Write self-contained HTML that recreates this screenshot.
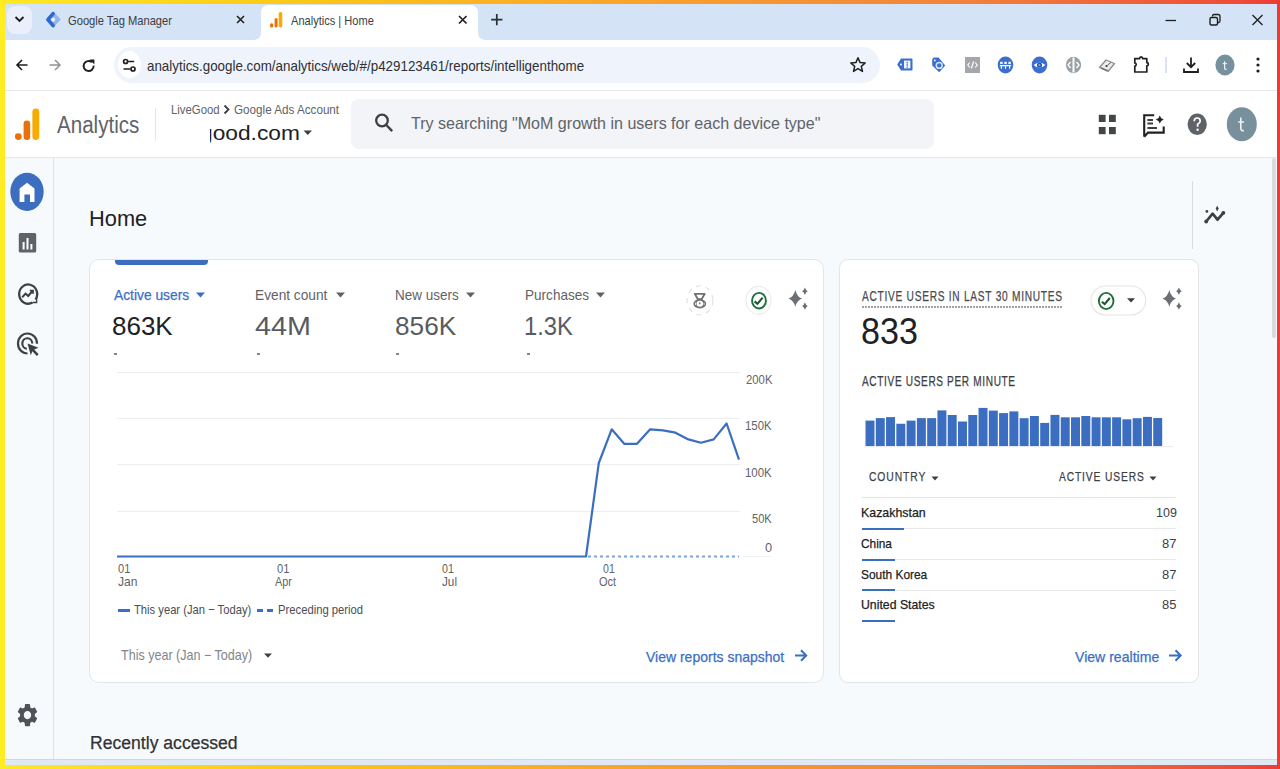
<!DOCTYPE html>
<html><head><meta charset="utf-8"><title>Analytics | Home</title>
<style>
html,body{margin:0;padding:0;}
body{width:1280px;height:769px;overflow:hidden;position:relative;background:#fff;font-family:"Liberation Sans",sans-serif;}
.t{position:absolute;line-height:1;white-space:nowrap;transform-origin:0 0;}
.r{position:absolute;display:block;}
svg.r{overflow:visible;}
</style></head><body>
<div class="r" style="left:5px;top:4px;width:1272px;height:36px;background:#d4e3f5;"></div>
<div class="r" style="left:7px;top:6px;width:25px;height:28px;background:#e9f0fb;border-radius:8px;"></div>
<svg class="r" style="left:13px;top:15px;" width="13" height="9" viewBox="0 0 13 9"><path d="M2.5 2 L6.5 6 L10.5 2" fill="none" stroke="#1f1f1f" stroke-width="1.9"/></svg>
<svg class="r" style="left:45px;top:11px;" width="16" height="17" viewBox="0 0 16 17"><path d="M8.1 1.4 L14.7 8.6 L8.1 15.8 L1.5 8.6 Z" fill="#8fb4ee" stroke="#8fb4ee" stroke-width="1.5" stroke-linejoin="round"/><path d="M8.1 2.6 L3 8.6 L8.1 14.6" fill="none" stroke="#2f68d0" stroke-width="3.6" stroke-linecap="round" stroke-linejoin="round"/><circle cx="8.1" cy="8.6" r="2.1" fill="#e8f1fc"/></svg>
<div class="t" style="left:67.64px;top:14.00px;font-size:13px;color:#3c4043;transform:scaleX(0.8581);">Google Tag Manager</div>
<svg class="r" style="left:235px;top:14px;" width="11" height="11" viewBox="0 0 11 11"><path d="M2 2 L9 9 M9 2 L2 9" stroke="#222" stroke-width="1.6"/></svg>
<svg class="r" style="left:253px;top:5px" width="242" height="35" viewBox="0 0 242 35"><path d="M0 35 Q8 35 8 27 L8 8 Q8 0 16 0 L217 0 Q225 0 225 8 L225 27 Q225 35 233 35 Z" fill="#fff"/></svg>
<svg class="r" style="left:269px;top:11px;" width="15" height="18" viewBox="0 0 15 18"><rect x="1" y="12.3" width="3.2" height="4.3" rx="1.6" fill="#e8710a"/><rect x="5.6" y="7" width="3" height="9.6" rx="1.5" fill="#e8710a"/><rect x="9.7" y="1" width="3.6" height="15.6" rx="1.8" fill="#f9ab00"/></svg>
<div class="t" style="left:290.90px;top:15.00px;font-size:12.8px;color:#3c4043;transform:scaleX(0.8647);">Analytics | Home</div>
<svg class="r" style="left:457px;top:14px;" width="11" height="11" viewBox="0 0 11 11"><path d="M2 2 L9.5 9.5 M9.5 2 L2 9.5" stroke="#222" stroke-width="1.7"/></svg>
<svg class="r" style="left:490px;top:13px;" width="13" height="13" viewBox="0 0 13 13"><path d="M6.8 1 V12.2 M1.2 6.6 H12.4" stroke="#2a3036" stroke-width="1.7"/></svg>
<svg class="r" style="left:1164px;top:14px;" width="14" height="12" viewBox="0 0 14 12"><path d="M1.5 6.5 H12" stroke="#1f1f1f" stroke-width="1.3"/></svg>
<svg class="r" style="left:1208px;top:13px;" width="14" height="14" viewBox="0 0 14 14"><path d="M4.5 3.5 V3 Q4.5 1.5 6 1.5 H10 Q12 1.5 12 3.5 V8 Q12 9.5 10.5 9.5 H10" fill="none" stroke="#1f1f1f" stroke-width="1.3"/><rect x="2" y="4.5" width="7.5" height="7.5" rx="1.5" fill="none" stroke="#1f1f1f" stroke-width="1.4"/></svg>
<svg class="r" style="left:1250px;top:13px;" width="15" height="14" viewBox="0 0 15 14"><path d="M2.5 2 L12.5 12 M12.5 2 L2.5 12" stroke="#1f1f1f" stroke-width="1.3"/></svg>
<div class="r" style="left:5px;top:40px;width:1272px;height:50px;background:#ffffff;"></div>
<div class="r" style="left:5px;top:89.5px;width:1272px;height:1.0px;background:#e6e7ea;"></div>
<svg class="r" style="left:14px;top:57px;" width="16" height="16" viewBox="0 0 16 16"><path d="M13.5 8 H3 M8 3 L3 8 L8 13" fill="none" stroke="#1f1f1f" stroke-width="1.6"/></svg>
<svg class="r" style="left:47px;top:57px;" width="16" height="16" viewBox="0 0 16 16"><path d="M2.5 8 H13 M8 3 L13 8 L8 13" fill="none" stroke="#8f9296" stroke-width="1.5"/></svg>
<svg class="r" style="left:81px;top:58px;" width="16" height="16" viewBox="0 0 16 16"><path d="M12.6 7.6 A5 5 0 1 1 10.9 4.2" fill="none" stroke="#1f1f1f" stroke-width="1.9"/><path d="M8.6 1.6 H13.4 V6.4 Z" fill="#1f1f1f"/></svg>
<div class="r" style="left:114px;top:47px;width:766px;height:36px;background:#eff3fb;border-radius:18px;"></div>
<div class="r" style="left:118px;top:51px;width:23px;height:27px;background:#ffffff;border-radius:50%;"></div>
<svg class="r" style="left:121px;top:55px;" width="17" height="17" viewBox="0 0 17 17"><circle cx="4.6" cy="6.5" r="2" fill="none" stroke="#1f1f1f" stroke-width="1.7"/><path d="M7.2 6.5 H13.2 M2.5 14 H9" stroke="#1f1f1f" stroke-width="1.7"/><circle cx="12" cy="14" r="2" fill="none" stroke="#1f1f1f" stroke-width="1.7"/></svg>
<div class="t" style="left:147.47px;top:59.00px;font-size:14.5px;color:#2e3034;transform:scaleX(0.9222);">analytics.google.com/analytics/web/#/p429123461/reports/intelligenthome</div>
<svg class="r" style="left:849px;top:56px;" width="18" height="18" viewBox="0 0 18 18"><path d="M9 1.8 L11.1 6.6 L16.2 7 L12.3 10.4 L13.5 15.4 L9 12.7 L4.5 15.4 L5.7 10.4 L1.8 7 L6.9 6.6 Z" fill="none" stroke="#1f1f1f" stroke-width="1.5" stroke-linejoin="round"/></svg>
<svg class="r" style="left:896px;top:57px;" width="18" height="15" viewBox="0 0 18 15"><path d="M5 1.5 H15.5 Q16.5 1.5 16.5 2.5 V12.5 Q16.5 13.5 15.5 13.5 H5 L1.2 7.5 Z" fill="#3a6fd0"/><rect x="8" y="3.6" width="6.4" height="7.8" fill="#f4f7fd"/><rect x="10.6" y="4.8" width="1.3" height="1.6" fill="#3a6fd0"/><rect x="10.6" y="7.2" width="1.3" height="1.6" fill="#3a6fd0"/><rect x="10.6" y="9.6" width="1.3" height="1.2" fill="#3a6fd0"/><circle cx="5" cy="7.5" r="0.9" fill="#fff"/></svg>
<svg class="r" style="left:930px;top:56px;" width="17" height="18" viewBox="0 0 17 18"><path d="M2.2 4 Q2.2 1.6 4.6 1.6 L8.6 1.6 L15.2 9.4 L9.2 16.2 L2.2 9.4 Z" fill="#3a6fd0"/><circle cx="9.2" cy="9.4" r="2.9" fill="none" stroke="#d6e4fb" stroke-width="1.5"/><circle cx="4.8" cy="4.4" r="0.9" fill="#fff"/></svg>
<div class="r" style="left:965px;top:57px;width:15px;height:16px;background:#a3a6aa;"></div>
<svg class="r" style="left:965px;top:57px;" width="15" height="16" viewBox="0 0 15 16"><path d="M4.8 5.5 L2.8 8 L4.8 10.5 M10.2 5.5 L12.2 8 L10.2 10.5 M8.6 4.5 L6.4 11.5" fill="none" stroke="#fff" stroke-width="1.2"/></svg>
<svg class="r" style="left:997px;top:56px;" width="17" height="18" viewBox="0 0 17 18"><ellipse cx="8.5" cy="9" rx="7.8" ry="8.4" fill="#3a6fd0"/><rect x="3.2" y="5.8" width="2.4" height="2.2" fill="#fff"/><rect x="7.3" y="5.8" width="2.4" height="2.2" fill="#fff"/><rect x="11.4" y="5.8" width="2.4" height="2.2" fill="#fff"/><path d="M2.8 9.6 H14.2" stroke="#fff" stroke-width="1.3"/><path d="M4.4 9.6 V12.8 M8.5 9.6 V12.8 M12.6 9.6 V12.8" stroke="#fff" stroke-width="1.2"/></svg>
<svg class="r" style="left:1031px;top:56px;" width="17" height="18" viewBox="0 0 17 18"><ellipse cx="8.5" cy="9" rx="7.8" ry="8.4" fill="#3a6fd0"/><path d="M2.6 9 Q8.5 3.8 14.4 9 Q8.5 14.2 2.6 9 Z" fill="#fff"/><circle cx="8.5" cy="9" r="2.6" fill="#2a55a8"/><circle cx="8.5" cy="9" r="1.1" fill="#8fb0e8"/></svg>
<svg class="r" style="left:1065px;top:56px;" width="17" height="18" viewBox="0 0 17 18"><ellipse cx="8.5" cy="9" rx="7.6" ry="8.3" fill="#9aa0a6"/><path d="M8.5 1.5 V16.5" stroke="#fff" stroke-width="2"/><path d="M5.5 6 L3 9 L5.5 12 M11.5 6 L14 9 L11.5 12" fill="none" stroke="#fff" stroke-width="1.4"/></svg>
<svg class="r" style="left:1098px;top:58px;" width="18" height="16" viewBox="0 0 18 16"><path d="M1.5 9.5 L8 2 L16.5 5.5 L10 13.5 Z" fill="#ececec" stroke="#8a8a8a" stroke-width="1.2" stroke-linejoin="round"/><path d="M3 9.8 L9.6 12.6" stroke="#6d6d6d" stroke-width="1.4"/><circle cx="8.6" cy="8" r="1.1" fill="#333"/><path d="M9.5 7.2 L13 4.4" stroke="#555" stroke-width="0.9"/></svg>
<svg class="r" style="left:1132px;top:55px;" width="18" height="19" viewBox="0 0 18 19"><path d="M2.8 3.6 H7.6 Q7.6 1.9 9.1 1.9 Q10.6 1.9 10.6 3.6 H14.8 V7.6 Q16.4 7.6 16.4 9.2 Q16.4 10.8 14.8 10.8 V17 H2.8 V11.2 Q4.2 11.2 4.2 9.6 Q4.2 8 2.8 8 Z" fill="none" stroke="#1f1f1f" stroke-width="1.7" stroke-linejoin="round"/></svg>
<div class="r" style="left:1165px;top:57px;width:2px;height:16px;background:#d9e2f2;"></div>
<svg class="r" style="left:1182px;top:56px;" width="18" height="18" viewBox="0 0 18 18"><path d="M9 1.5 V11 M4.8 7 L9 11.2 L13.2 7" fill="none" stroke="#1f1f1f" stroke-width="1.8"/><path d="M2 12.5 V16 H16 V12.5" fill="none" stroke="#1f1f1f" stroke-width="1.8"/></svg>
<svg class="r" style="left:1215px;top:54px;" width="20" height="22" viewBox="0 0 20 22"><ellipse cx="10" cy="11" rx="9.6" ry="10.4" fill="#77909e"/></svg>
<svg class="r" style="left:1220px;top:60px;" width="10" height="11" viewBox="0 0 10 11"><path d="M4.6 1.2 V8.2 Q4.6 9.6 6.6 9.4" fill="none" stroke="#eef2f4" stroke-width="1.2"/><path d="M2.6 3.6 H7" stroke="#eef2f4" stroke-width="1.1"/></svg>
<svg class="r" style="left:1255px;top:56px;" width="6" height="18" viewBox="0 0 6 18"><circle cx="3" cy="3" r="1.6" fill="#1f1f1f"/><circle cx="3" cy="9" r="1.6" fill="#1f1f1f"/><circle cx="3" cy="15" r="1.6" fill="#1f1f1f"/></svg>
<div class="r" style="left:5px;top:90.5px;width:1272px;height:66.5px;background:#ffffff;"></div>
<div class="r" style="left:5px;top:157px;width:1272px;height:1px;background:#e5e8eb;"></div>
<svg class="r" style="left:14px;top:107px;" width="27" height="35" viewBox="0 0 27 35"><circle cx="4.3" cy="29.6" r="3.4" fill="#e8710a"/><rect x="9.6" y="13.6" width="6.6" height="19.4" rx="3.3" fill="#e8710a"/><rect x="18.4" y="1.4" width="6.8" height="31.6" rx="3.4" fill="#f9ab00"/></svg>
<div class="t" style="left:57.40px;top:114.00px;font-size:23px;color:#5f6368;transform:scaleX(0.8948);">Analytics</div>
<div class="r" style="left:155px;top:108px;width:1px;height:33px;background:#e3e5e8;"></div>
<div class="t" style="left:170.84px;top:103.00px;font-size:13px;color:#5f6368;transform:scaleX(0.8724);">LiveGood</div>
<svg class="r" style="left:222px;top:104px;" width="9" height="11" viewBox="0 0 9 11"><path d="M2.5 1.5 L6.5 5.5 L2.5 9.5" fill="none" stroke="#3c4043" stroke-width="1.8"/></svg>
<div class="t" style="left:234.02px;top:103.00px;font-size:13px;color:#5f6368;transform:scaleX(0.8977);">Google Ads Account</div>
<div class="r" style="left:209.5px;top:118px;width:92px;height:28px;overflow:hidden"><div class="t" style="left:-9.55px;top:4px;font-size:21px;color:#202124;transform:scaleX(1.0824)">good.com</div></div>
<svg class="r" style="left:303px;top:130px;" width="10" height="6" viewBox="0 0 10 6"><path d="M0.5 0.5 H9 L4.75 5 Z" fill="#3c4043"/></svg>
<div class="r" style="left:351px;top:99px;width:583px;height:50px;background:#f2f4f8;border-radius:8px;"></div>
<svg class="r" style="left:374px;top:112px;" width="21" height="22" viewBox="0 0 21 22"><circle cx="8" cy="8.5" r="5.8" fill="none" stroke="#3c4043" stroke-width="2.3"/><path d="M12.3 13 L18.2 19.2" stroke="#3c4043" stroke-width="2.4"/></svg>
<div class="t" style="left:411.28px;top:115.00px;font-size:16.5px;color:#5f6368;transform:scaleX(0.9724);">Try searching "MoM growth in users for each device type"</div>
<svg class="r" style="left:1098px;top:114px;" width="19" height="21" viewBox="0 0 19 21"><rect x="0.8" y="0.8" width="6.8" height="7.2" fill="#434649"/><rect x="11" y="0.8" width="6.8" height="7.2" fill="#434649"/><rect x="0.8" y="13" width="6.8" height="7.2" fill="#434649"/><rect x="11" y="13" width="6.8" height="7.2" fill="#434649"/></svg>
<svg class="r" style="left:1141px;top:113px;" width="26" height="26" viewBox="0 0 26 26"><path d="M3.2 23.8 V2.3 H13.2 M3.2 23.8 L7 19.6 H22.7 V13.6" fill="none" stroke="#202124" stroke-width="2.1" stroke-linejoin="miter"/><path d="M6.4 7 H12 M6.4 10.5 H12 M6.4 15 H16" stroke="#3c4043" stroke-width="1.8"/><path d="M18.8 2.6 L20.2 5.2 L22.8 6.6 L20.2 8 L18.8 10.6 L17.4 8 L14.8 6.6 L17.4 5.2 Z" fill="#202124"/></svg>
<svg class="r" style="left:1187px;top:112px;" width="21" height="24" viewBox="0 0 21 24"><ellipse cx="10.2" cy="12.3" rx="9.6" ry="10.8" fill="#5f6368"/><path d="M7.2 9.3 Q7.2 6 10.2 6 Q13.2 6 13.2 9 Q13.2 11 10.6 12.2 V14.8" fill="none" stroke="#fff" stroke-width="1.7"/><circle cx="10.6" cy="17.8" r="1.2" fill="#fff"/></svg>
<svg class="r" style="left:1226px;top:107px;" width="32" height="35" viewBox="0 0 32 35"><ellipse cx="15.8" cy="17.2" rx="15" ry="17" fill="#78909c"/></svg>
<svg class="r" style="left:1234px;top:115px;" width="14" height="19" viewBox="0 0 14 19"><path d="M6.8 2.5 V13.6 Q6.8 15.9 9.8 15.6" fill="none" stroke="#eef2f4" stroke-width="1.6"/><path d="M4.2 7 H10" stroke="#eef2f4" stroke-width="1.5"/></svg>
<div class="r" style="left:5px;top:158px;width:1272px;height:601px;background:#f7fafc;"></div>
<div class="r" style="left:52.5px;top:158px;width:1.0px;height:601px;background:#dfe1e5;"></div>
<div class="r" style="left:5px;top:759px;width:1272px;height:1px;background:#d3d7dc;"></div>
<div class="r" style="left:5px;top:760px;width:1272px;height:5px;background:#dfe9f6;"></div>
<svg class="r" style="left:10px;top:172px;" width="34" height="39" viewBox="0 0 34 39"><ellipse cx="17" cy="19.8" rx="16.7" ry="19.1" fill="#3b6ec0"/><path d="M9.6 16.6 L17 10.7 L24.5 16.6 V30 H20 V22.6 H14.4 V30 H9.6 Z" fill="#fff"/></svg>
<svg class="r" style="left:18px;top:232px;" width="19" height="21" viewBox="0 0 19 21"><rect x="0.8" y="1" width="17.4" height="19.5" rx="1.5" fill="#5f6368"/><rect x="4.6" y="10" width="2" height="7.5" fill="#fff"/><rect x="8.5" y="6" width="2" height="11.5" fill="#fff"/><rect x="12.4" y="12" width="2" height="5.5" fill="#fff"/></svg>
<svg class="r" style="left:17px;top:283px;" width="21" height="22" viewBox="0 0 21 22"><path d="M18.6 16.5 A9 9.6 0 1 0 15.5 19.5" fill="none" stroke="#3c4043" stroke-width="2.3"/><path d="M15.5 19.5 H19.6 V15.5" fill="none" stroke="#3c4043" stroke-width="1.4"/><path d="M5.2 14.2 L8.6 10.6 L11.2 13 L15.5 8" fill="none" stroke="#3c4043" stroke-width="2"/><path d="M12.8 7.6 H16 V10.8" fill="none" stroke="#3c4043" stroke-width="1.8"/></svg>
<svg class="r" style="left:17px;top:333px;" width="23" height="24" viewBox="0 0 23 24"><path d="M10.5 20.5 A9.5 10 0 1 1 20 10.8" fill="none" stroke="#3c4043" stroke-width="2.2"/><path d="M9.8 15.8 A5 5.3 0 1 1 15.3 10.6" fill="none" stroke="#3c4043" stroke-width="2.2"/><path d="M10.5 10.5 L21.5 14.8 L17.2 16.5 L21.6 21.3 L19.8 23 L15.4 18.3 L13.8 22.2 Z" fill="#3c4043"/></svg>
<svg class="r" style="left:16px;top:702px;" width="23" height="26" viewBox="0 0 23 26"><g transform="translate(-0.9 -0.7) scale(1.03 1.15)"><path d="M19.14 12.94c.04-.3.06-.61.06-.94 0-.32-.02-.64-.07-.94l2.03-1.58c.18-.14.23-.41.12-.61l-1.92-3.32c-.12-.22-.37-.29-.59-.22l-2.39.96c-.5-.38-1.03-.7-1.62-.94L14.4 2.81c-.04-.24-.24-.41-.48-.41h-3.84c-.24 0-.43.17-.47.41L9.25 5.35c-.59.24-1.13.57-1.62.94L5.24 5.33c-.22-.08-.47 0-.59.22L2.74 8.87c-.12.21-.08.47.12.61l2.03 1.58c-.05.3-.09.63-.09.94s.02.64.07.94l-2.03 1.58c-.18.14-.23.41-.12.61l1.92 3.32c.12.22.37.29.59.22l2.39-.96c.5.38 1.03.7 1.62.94l.36 2.54c.05.24.24.41.48.41h3.84c.24 0 .44-.17.47-.41l.36-2.54c.59-.24 1.13-.56 1.62-.94l2.39.96c.22.08.47 0 .59-.22l1.92-3.32c.12-.22.07-.47-.12-.61l-2.01-1.58zM12 15.6c-1.98 0-3.6-1.62-3.6-3.6s1.62-3.6 3.6-3.6 3.6 1.62 3.6 3.6-1.62 3.6-3.6 3.6z" fill="#4f5357"/></g></svg>
<div class="t" style="left:89.46px;top:208.00px;font-size:22.5px;color:#202124;transform:scaleX(0.9692);">Home</div>
<div class="r" style="left:1192px;top:181px;width:1px;height:68px;background:#dadce0;"></div>
<svg class="r" style="left:1203px;top:204px;" width="25" height="22" viewBox="0 0 25 22"><path d="M3.2 17.5 L9.6 9.7 L14.5 15.7 L20.4 8.8" fill="none" stroke="#3c4043" stroke-width="2.7" stroke-linejoin="round" stroke-linecap="round"/><circle cx="3.2" cy="17.5" r="1.9" fill="#3c4043"/><circle cx="20.4" cy="8.8" r="1.9" fill="#3c4043"/><circle cx="3.9" cy="7.4" r="1.4" fill="#3c4043"/><path d="M14.2 1.8 L15.7 4.6 L14.2 7.4 L12.7 4.6 Z" fill="#3c4043"/></svg>
<div class="r" style="left:1272px;top:158px;width:4px;height:180px;background:#d9dbde;border-radius:2px;"></div>
<div class="r" style="left:89px;top:259px;width:735px;height:424px;background:#ffffff;box-sizing:border-box;border:1px solid #e3e5e8;border-radius:10px;"></div>
<div class="r" style="left:114.5px;top:260px;width:93.5px;height:4.5px;background:#3b6ec0;border-radius:0 0 4px 4px;"></div>
<div class="t" style="left:113.50px;top:288.00px;font-size:14.5px;color:#3b6fc4;transform:scaleX(0.9523);-webkit-text-stroke:0.25px currentColor;">Active users</div>
<div class="t" style="left:255.20px;top:288.00px;font-size:14.5px;color:#5f6368;transform:scaleX(0.9456);">Event count</div>
<div class="t" style="left:394.82px;top:288.00px;font-size:14.5px;color:#5f6368;transform:scaleX(0.9290);">New users</div>
<div class="t" style="left:525.42px;top:288.00px;font-size:14.5px;color:#5f6368;transform:scaleX(0.9350);">Purchases</div>
<svg class="r" style="left:196px;top:292px;" width="9" height="6" viewBox="0 0 9 6"><path d="M0 0.5 H9 L4.5 5.5 Z" fill="#3b6fc4"/></svg>
<svg class="r" style="left:335.5px;top:292px;" width="9" height="6" viewBox="0 0 9 6"><path d="M0 0.5 H9 L4.5 5.5 Z" fill="#5f6368"/></svg>
<svg class="r" style="left:465.5px;top:292px;" width="9" height="6" viewBox="0 0 9 6"><path d="M0 0.5 H9 L4.5 5.5 Z" fill="#5f6368"/></svg>
<svg class="r" style="left:596px;top:292px;" width="9" height="6" viewBox="0 0 9 6"><path d="M0 0.5 H9 L4.5 5.5 Z" fill="#5f6368"/></svg>
<div class="t" style="left:112.46px;top:313.00px;font-size:26.5px;color:#202124;transform:scaleX(0.9805);">863K</div>
<div class="t" style="left:255.43px;top:313.00px;font-size:26.5px;color:#585c61;transform:scaleX(1.0840);">44M</div>
<div class="t" style="left:394.95px;top:313.00px;font-size:26.5px;color:#585c61;transform:scaleX(0.9887);">856K</div>
<div class="t" style="left:524.22px;top:313.00px;font-size:26.5px;color:#585c61;transform:scaleX(0.8980);">1.3K</div>
<div class="r" style="left:114px;top:353px;width:3px;height:1.5px;background:#80868b;"></div>
<div class="r" style="left:257px;top:353px;width:3px;height:1.5px;background:#80868b;"></div>
<div class="r" style="left:396px;top:353px;width:3px;height:1.5px;background:#80868b;"></div>
<div class="r" style="left:527px;top:353px;width:3px;height:1.5px;background:#80868b;"></div>
<svg class="r" style="left:685px;top:284px;" width="30" height="33" viewBox="0 0 30 33"><ellipse cx="15" cy="16.3" rx="12.9" ry="14.5" fill="none" stroke="#e3e3e3" stroke-width="1.3" stroke-dasharray="5 5"/><path d="M9.8 9.9 H19.7 L16.6 15.3 H12.9 Z" fill="none" stroke="#707070" stroke-width="1.9" stroke-linejoin="round"/><ellipse cx="14.8" cy="19.8" rx="6.4" ry="4.6" fill="#707070"/><ellipse cx="14.8" cy="19.8" rx="3.3" ry="3" fill="#fff"/><path d="M14.8 17.8 L15.7 19.3 L14.8 20.8 L13.9 19.3 Z" fill="#707070"/><path d="M10.5 18.5 V21 M19.1 18.5 V21" stroke="#fff" stroke-width="0.8"/></svg>
<svg class="r" style="left:745px;top:286px;" width="28" height="30" viewBox="0 0 28 30"><ellipse cx="13.5" cy="14.35" rx="12.5" ry="14" fill="#fff" stroke="#ebebeb" stroke-width="1.1"/><ellipse cx="14" cy="14.7" rx="6.95" ry="7.8" fill="none" stroke="#1e7038" stroke-width="1.9"/><path d="M9.6 15.4 L12.5 17.8 L17.6 11.7" fill="none" stroke="#17592c" stroke-width="2.1"/></svg>
<svg class="r" style="left:786px;top:284px;" width="24" height="28" viewBox="0 0 24 28"><path d="M9.3 5.9 Q11 12.8 16 14.5 Q11 16.2 9.3 22.7 Q7.6 16.2 2.5 14.5 Q7.6 12.8 9.3 5.9 Z" fill="#6b6e72"/><path d="M18.9 3.5 Q19.8 6.3 21.7 7.2 Q19.8 8.1 18.9 10.9 Q18 8.1 16.1 7.2 Q18 6.3 18.9 3.5 Z" fill="#6b6e72"/><path d="M18.9 18.2 Q19.8 21.1 21.7 22 Q19.8 22.9 18.9 25.8 Q18 22.9 16.1 22 Q18 21.1 18.9 18.2 Z" fill="#6b6e72"/></svg>
<div class="r" style="left:117px;top:372px;width:623px;height:1px;background:#eceef0;"></div>
<div class="r" style="left:117px;top:418px;width:623px;height:1px;background:#eceef0;"></div>
<div class="r" style="left:117px;top:464px;width:623px;height:1px;background:#eceef0;"></div>
<div class="r" style="left:117px;top:511px;width:623px;height:1px;background:#eceef0;"></div>
<div class="r" style="left:743px;top:556px;width:29px;height:1px;background:#f1f3f4;"></div>
<div class="t" style="left:745.63px;top:373.00px;font-size:13px;color:#5f6368;transform:scaleX(0.8704);">200K</div>
<div class="t" style="left:745.34px;top:419.00px;font-size:13px;color:#5f6368;transform:scaleX(0.8801);">150K</div>
<div class="t" style="left:745.34px;top:466.00px;font-size:13px;color:#5f6368;transform:scaleX(0.8801);">100K</div>
<div class="t" style="left:752.36px;top:512.00px;font-size:13px;color:#5f6368;transform:scaleX(0.8537);">50K</div>
<div class="t" style="left:765.35px;top:541.00px;font-size:13px;color:#5f6368;transform:scaleX(0.9833);">0</div>
<div class="t" style="left:117.81px;top:563.00px;font-size:12.8px;color:#5f6368;transform:scaleX(0.8647);">01</div>
<div class="t" style="left:118.02px;top:576.00px;font-size:12.8px;color:#5f6368;transform:scaleX(0.9416);">Jan</div>
<div class="t" style="left:277.01px;top:563.00px;font-size:12.8px;color:#5f6368;transform:scaleX(0.8723);">01</div>
<div class="t" style="left:275.00px;top:576.00px;font-size:12.8px;color:#5f6368;transform:scaleX(0.8495);">Apr</div>
<div class="t" style="left:442.43px;top:563.00px;font-size:12.8px;color:#5f6368;transform:scaleX(0.8343);">01</div>
<div class="t" style="left:442.02px;top:576.00px;font-size:12.8px;color:#5f6368;transform:scaleX(0.9180);">Jul</div>
<div class="t" style="left:603.43px;top:563.00px;font-size:12.8px;color:#5f6368;transform:scaleX(0.8268);">01</div>
<div class="t" style="left:598.51px;top:576.00px;font-size:12.8px;color:#5f6368;transform:scaleX(0.8589);">Oct</div>
<svg class="r" style="left:90px;top:360px;" width="660" height="210" viewBox="0 0 660 210"><path d="M498 556.5 H649" transform="translate(0 -360)" stroke="#7aa3e0" stroke-width="2" stroke-dasharray="3 3"/><path d="M27.0 196.5 L496.0 196.5 L508.8 103.0 L521.7 69.3 L534.2 83.8 L547.0 83.8 L560.2 69.3 L573.0 70.3 L585.5 72.7 L598.4 79.4 L610.9 82.8 L623.7 79.4 L636.6 63.5 L649.0 99.7" fill="none" stroke="#3b6ec0" stroke-width="2.2" stroke-linejoin="round"/></svg>
<div class="r" style="left:118px;top:609px;width:12px;height:2.7999999999999545px;background:#3b6fc4;"></div>
<div class="t" style="left:134.38px;top:603.00px;font-size:13.3px;color:#4a4e52;transform:scaleX(0.8431);">This year (Jan − Today)</div>
<div class="r" style="left:257px;top:609px;width:6px;height:2.7999999999999545px;background:#3b6fc4;"></div>
<div class="r" style="left:267px;top:609px;width:6px;height:2.7999999999999545px;background:#3b6fc4;"></div>
<div class="t" style="left:278.10px;top:603.00px;font-size:13.3px;color:#4a4e52;transform:scaleX(0.8461);">Preceding period</div>
<div class="t" style="left:120.55px;top:648.00px;font-size:14.5px;color:#80868b;transform:scaleX(0.8651);">This year (Jan − Today)</div>
<svg class="r" style="left:264px;top:653px;" width="9" height="6" viewBox="0 0 9 6"><path d="M0 0.5 H8 L4 4.8 Z" fill="#3c4043"/></svg>
<div class="t" style="left:646.00px;top:650.00px;font-size:14.8px;color:#3b6fc4;transform:scaleX(0.9456);-webkit-text-stroke:0.25px currentColor;">View reports snapshot</div>
<svg class="r" style="left:794px;top:648px;" width="14" height="15" viewBox="0 0 14 15"><path d="M1 7.5 H12 M7 2.2 L12.2 7.5 L7 12.8" fill="none" stroke="#3b6fc4" stroke-width="2"/></svg>
<div class="t" style="left:89.99px;top:733.00px;font-size:19.2px;color:#303134;transform:scaleX(0.9167);-webkit-text-stroke:0.25px currentColor;">Recently accessed</div>
<div class="r" style="left:839px;top:259px;width:360px;height:424px;background:#ffffff;box-sizing:border-box;border:1px solid #e3e5e8;border-radius:9px;"></div>
<div class="t" style="left:862.00px;top:289.00px;font-size:14px;color:#484c51;letter-spacing:1.0px;transform:scaleX(0.7258);-webkit-text-stroke:0.25px currentColor;">ACTIVE USERS IN LAST 30 MINUTES</div>
<div class="r" style="left:862px;top:306px;width:200px;height:2px;background:repeating-linear-gradient(90deg,#9ea2a7 0 2px,transparent 2px 3px);"></div>
<div class="t" style="left:860.64px;top:314.00px;font-size:36.5px;color:#202124;transform:scaleX(0.9334);">833</div>
<svg class="r" style="left:1090px;top:285px;" width="57" height="31" viewBox="0 0 57 31"><rect x="0.9" y="1" width="54.8" height="29" rx="14.5" fill="#fff" stroke="#e6e6e6" stroke-width="1.1"/><ellipse cx="16.2" cy="16" rx="7.3" ry="8.1" fill="none" stroke="#1e7038" stroke-width="1.9"/><path d="M11.8 16.7 L14.7 19.1 L19.8 13" fill="none" stroke="#17592c" stroke-width="2.1"/><path d="M37 13.3 H45 L41 17.5 Z" fill="#3c4043"/></svg>
<svg class="r" style="left:1160px;top:284px;" width="24" height="28" viewBox="0 0 24 28"><path d="M9.3 5.9 Q11 12.8 16 14.5 Q11 16.2 9.3 22.7 Q7.6 16.2 2.5 14.5 Q7.6 12.8 9.3 5.9 Z" fill="#6b6e72"/><path d="M18.9 3.5 Q19.8 6.3 21.7 7.2 Q19.8 8.1 18.9 10.9 Q18 8.1 16.1 7.2 Q18 6.3 18.9 3.5 Z" fill="#6b6e72"/><path d="M18.9 18.2 Q19.8 21.1 21.7 22 Q19.8 22.9 18.9 25.8 Q18 22.9 16.1 22 Q18 21.1 18.9 18.2 Z" fill="#6b6e72"/></svg>
<div class="t" style="left:862.00px;top:375.00px;font-size:13.8px;color:#3c4043;letter-spacing:0.9px;transform:scaleX(0.7292);-webkit-text-stroke:0.25px currentColor;">ACTIVE USERS PER MINUTE</div>
<svg class="r" style="left:860px;top:400px;" width="320" height="50" viewBox="0 0 320 50"><rect x="5.50" y="20.60" width="8.98" height="25.60" fill="#3b6ec0"/><rect x="15.78" y="18.10" width="8.98" height="28.10" fill="#3b6ec0"/><rect x="26.05" y="17.10" width="8.98" height="29.10" fill="#3b6ec0"/><rect x="36.33" y="23.75" width="8.98" height="22.45" fill="#3b6ec0"/><rect x="46.60" y="20.60" width="8.98" height="25.60" fill="#3b6ec0"/><rect x="56.88" y="18.10" width="8.98" height="28.10" fill="#3b6ec0"/><rect x="67.16" y="18.10" width="8.98" height="28.10" fill="#3b6ec0"/><rect x="77.43" y="10.40" width="8.98" height="35.80" fill="#3b6ec0"/><rect x="87.71" y="15.00" width="8.98" height="31.20" fill="#3b6ec0"/><rect x="97.98" y="21.50" width="8.98" height="24.70" fill="#3b6ec0"/><rect x="108.26" y="15.00" width="8.98" height="31.20" fill="#3b6ec0"/><rect x="118.53" y="7.90" width="8.98" height="38.30" fill="#3b6ec0"/><rect x="128.81" y="10.60" width="8.98" height="35.60" fill="#3b6ec0"/><rect x="139.09" y="13.10" width="8.98" height="33.10" fill="#3b6ec0"/><rect x="149.36" y="11.40" width="8.98" height="34.80" fill="#3b6ec0"/><rect x="159.64" y="18.20" width="8.98" height="28.00" fill="#3b6ec0"/><rect x="169.91" y="16.00" width="8.98" height="30.20" fill="#3b6ec0"/><rect x="180.19" y="22.90" width="8.98" height="23.30" fill="#3b6ec0"/><rect x="190.47" y="14.90" width="8.98" height="31.30" fill="#3b6ec0"/><rect x="200.74" y="17.30" width="8.98" height="28.90" fill="#3b6ec0"/><rect x="211.02" y="17.30" width="8.98" height="28.90" fill="#3b6ec0"/><rect x="221.29" y="16.00" width="8.98" height="30.20" fill="#3b6ec0"/><rect x="231.57" y="17.30" width="8.98" height="28.90" fill="#3b6ec0"/><rect x="241.84" y="17.30" width="8.98" height="28.90" fill="#3b6ec0"/><rect x="252.12" y="17.30" width="8.98" height="28.90" fill="#3b6ec0"/><rect x="262.40" y="19.30" width="8.98" height="26.90" fill="#3b6ec0"/><rect x="272.67" y="18.20" width="8.98" height="28.00" fill="#3b6ec0"/><rect x="282.95" y="16.90" width="8.98" height="29.30" fill="#3b6ec0"/><rect x="293.22" y="18.00" width="8.98" height="28.20" fill="#3b6ec0"/><rect x="5" y="46.2" width="308" height="1" fill="#e8eaed"/></svg>
<div class="t" style="left:868.88px;top:470.00px;font-size:13.7px;color:#3c4043;letter-spacing:1.2px;transform:scaleX(0.7543);-webkit-text-stroke:0.25px currentColor;">COUNTRY</div>
<svg class="r" style="left:931px;top:476px;" width="9" height="6" viewBox="0 0 9 6"><path d="M0.5 0.5 H7.5 L4 4.5 Z" fill="#3c4043"/></svg>
<div class="t" style="left:1058.60px;top:470.00px;font-size:13.7px;color:#3c4043;letter-spacing:1.2px;transform:scaleX(0.7460);-webkit-text-stroke:0.25px currentColor;">ACTIVE USERS</div>
<svg class="r" style="left:1149px;top:476px;" width="9" height="6" viewBox="0 0 9 6"><path d="M0.5 0.5 H7.5 L4 4.5 Z" fill="#3c4043"/></svg>
<div class="r" style="left:862px;top:497px;width:314px;height:1px;background:#e3e5e8;"></div>
<div class="t" style="left:861.01px;top:506.00px;font-size:13.2px;color:#202124;transform:scaleX(0.9386);-webkit-text-stroke:0.25px currentColor;">Kazakhstan</div>
<div class="t" style="left:1155.76px;top:506.00px;font-size:13.2px;color:#3c4043;transform:scaleX(0.9464);">109</div>
<div class="r" style="left:862px;top:528px;width:314px;height:1px;background:#e8eaed;"></div>
<div class="r" style="left:862px;top:527.5px;width:41.700000000000045px;height:2.0px;background:#3b6ec0;"></div>
<div class="t" style="left:861.41px;top:537.00px;font-size:13.2px;color:#202124;transform:scaleX(0.8979);-webkit-text-stroke:0.25px currentColor;">China</div>
<div class="t" style="left:1162.18px;top:537.00px;font-size:13.2px;color:#3c4043;transform:scaleX(0.9830);">87</div>
<div class="r" style="left:862px;top:559px;width:314px;height:1px;background:#e8eaed;"></div>
<div class="r" style="left:862px;top:558.5px;width:33.299999999999955px;height:2.0px;background:#3b6ec0;"></div>
<div class="t" style="left:861.46px;top:568.00px;font-size:13.2px;color:#202124;transform:scaleX(0.9031);-webkit-text-stroke:0.25px currentColor;">South Korea</div>
<div class="t" style="left:1162.18px;top:568.00px;font-size:13.2px;color:#3c4043;transform:scaleX(0.9830);">87</div>
<div class="r" style="left:862px;top:589.5px;width:314px;height:1.0px;background:#e8eaed;"></div>
<div class="r" style="left:862px;top:589.0px;width:33.299999999999955px;height:2.0px;background:#3b6ec0;"></div>
<div class="t" style="left:861.08px;top:598.00px;font-size:13.2px;color:#202124;transform:scaleX(0.9304);-webkit-text-stroke:0.25px currentColor;">United States</div>
<div class="t" style="left:1162.18px;top:598.00px;font-size:13.2px;color:#3c4043;transform:scaleX(0.9782);">85</div>
<div class="r" style="left:862px;top:619.5px;width:33.299999999999955px;height:2.0px;background:#3b6ec0;"></div>
<div class="t" style="left:1075.30px;top:650.00px;font-size:14.8px;color:#3b6fc4;transform:scaleX(0.9513);-webkit-text-stroke:0.25px currentColor;">View realtime</div>
<svg class="r" style="left:1167px;top:648px;" width="16" height="15" viewBox="0 0 16 15"><path d="M2 7.5 H13.5 M8.5 2.2 L13.7 7.5 L8.5 12.8" fill="none" stroke="#3b6fc4" stroke-width="2"/></svg>
<div class="r" style="left:0px;top:0px;width:1280px;height:4px;background:linear-gradient(90deg,#ffe925 0%,#fcc516 25%,#f9a22c 50%,#f2833b 75%,#ee4b38 97%,#ee3b36 100%);"></div>
<div class="r" style="left:0px;top:765px;width:1280px;height:4px;background:linear-gradient(90deg,#ffe925 0%,#fcc516 25%,#f9a22c 50%,#f2833b 75%,#ee4b38 97%,#ee3b36 100%);"></div>
<div class="r" style="left:0px;top:0px;width:5px;height:769px;background:#ffec22;"></div>
<div class="r" style="left:1277px;top:0px;width:3px;height:769px;background:#ee3a35;"></div>
</body></html>
